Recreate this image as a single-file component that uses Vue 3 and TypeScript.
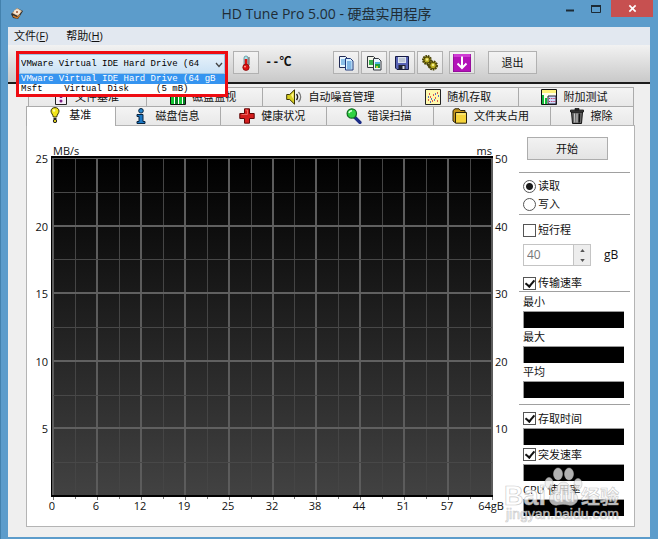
<script setup lang="ts">
import { ref } from 'vue'

interface Tab {
  label: string
  icon: string
  grow: number
}

const drive = ref('VMware Virtual IDE Hard Drive (64')
const drives: string[] = ['VMware Virtual IDE Hard Drive (64 gB', 'Msft    Virtual Disk     (5 mB)']

const backTabs: Tab[] = [
  { label: '文件基准', icon: 'filebench', grow: 118 },
  { label: '磁盘监视', icon: 'monitor', grow: 116 },
  { label: '自动噪音管理', icon: 'speaker', grow: 139 },
  { label: '随机存取', icon: 'random', grow: 117 },
  { label: '附加测试', icon: 'extra', grow: 115 },
]
const frontTabs: Tab[] = [
  { label: '基准', icon: 'bulb', grow: 88 },
  { label: '磁盘信息', icon: 'info', grow: 106 },
  { label: '健康状况', icon: 'cross', grow: 106 },
  { label: '错误扫描', icon: 'magnifier', grow: 107 },
  { label: '文件夹占用', icon: 'folder', grow: 118 },
  { label: '擦除', icon: 'trash', grow: 82 },
]

const xLabels: string[] = ['0', '6', '12', '19', '25', '32', '38', '44', '51', '57', '64gB']
const yLeft: string[] = ['25', '20', '15', '10', '5']
const yRight: string[] = ['50', '40', '30', '20', '10']

const plot = { left: 26, top: 32, right: 465, bottom: 370 }
const gx = (i: number): number => Math.round(plot.left + (i * (plot.right - plot.left)) / 20)
const gy = (i: number): number => Math.round(plot.top + (i * (plot.bottom - plot.top)) / 10)

const mode = ref('read')
const shortStroke = ref(false)
const strokeSize = ref('40')
const transfer = ref(true)
const access = ref(true)
const burst = ref(true)
</script>

<template>
  <div class="window">
    <header class="titlebar">
      <svg class="app-icon" viewBox="0 0 14 14" aria-hidden="true">
        <path d="M1 7 7 1l6 3-5 8-5-1z" fill="#33302c" />
        <path d="M2 6 7 1l5 3-4 5z" fill="#e2c6a6" />
        <ellipse cx="7" cy="5" rx="3" ry="2.4" fill="#f7e8d4" />
        <circle cx="7" cy="5" r="1" fill="#a0522d" />
        <path d="M3 9l4 2 3-3" stroke="#c9792b" stroke-width="1.4" fill="none" />
      </svg>
      <h1>HD Tune Pro 5.00 - 硬盘实用程序</h1>
      <div class="controls">
        <button type="button" class="ctl" aria-label="最小化"><svg viewBox="0 0 10 10"><path d="M1 6.5h8" stroke="#1c2a35" stroke-width="2" /></svg></button>
        <button type="button" class="ctl" aria-label="最大化"><svg viewBox="0 0 10 10"><path d="M.5 1.5h9v7h-9z" fill="none" stroke="#1c2a35" /><path d="M0 2h10" stroke="#1c2a35" stroke-width="2" /></svg></button>
        <button type="button" class="ctl close" aria-label="关闭"><svg viewBox="0 0 10 10"><path d="M1.5 1.5l7 7M8.5 1.5l-7 7" stroke="#fff" stroke-width="1.8" /></svg></button>
      </div>
    </header>

    <div class="client">
      <nav class="menu">
        <a href="#">文件(<u>F</u>)</a>
        <a href="#">帮助(<u>H</u>)</a>
      </nav>

      <div class="toolbar">
        <div class="picker">
          <select v-model="drive" aria-label="硬盘">
            <option>{{ drive }}</option>
          </select>
          <svg class="chevron" viewBox="0 0 8 6" aria-hidden="true"><path d="M1 1l3 3.5L7 1" fill="none" stroke="#444" stroke-width="1.3" /></svg>
          <ul class="drives" role="listbox" aria-label="硬盘列表">
            <li v-for="(d, i) in drives" :key="d" role="option" :aria-selected="i === 0" :class="{ on: i === 0 }">{{ d }}</li>
          </ul>
        </div>
        <button type="button" class="tool" aria-label="温度">
          <svg viewBox="0 0 16 16"><rect x="6" y="1" width="4" height="10" rx="2" fill="#a9e4ea" stroke="#5a8a96" stroke-width=".8" /><path d="M8 4v8" stroke="#e01010" stroke-width="2.6" /><circle cx="8" cy="12.3" r="3.2" fill="#dc1010" stroke="#7c0505" stroke-width=".7" /><path d="M11 2v8" stroke="#333" stroke-width=".8" /><circle cx="7" cy="11.6" r=".9" fill="#ffb0a0" /></svg>
        </button>
        <span class="temp">--℃</span>
        <div class="tools">
          <button type="button" class="tool" aria-label="复制文本">
            <svg viewBox="0 0 16 16"><path d="M1.5 1.5h6l2 2v9h-8z" fill="#e8f6ff" stroke="#222b55" /><path d="M3 5h5M3 7h5M3 9h5" stroke="#338ad0" /><path d="M7.500 3.500h5l2.500 2.500v9H7.500z" fill="#d8f0ff" stroke="#203a7c" /><path d="M9 7h4.500M9 9h4.500M9 11h4.500M9 13h4.500" stroke="#2c7fc8" /></svg>
          </button>
          <button type="button" class="tool" aria-label="复制图像">
            <svg viewBox="0 0 16 16"><path d="M1.500 1.500h6l2 2v9h-8z" fill="#f2f5e9" stroke="#33373d" /><path d="M3 5h4v5H3z" fill="#36b14b" /><path d="M7.500 3.500h5l2.500 2.500v9H7.500z" fill="#eef8ff" stroke="#33373d" /><path d="M9 7h5v6H9z" fill="#1e9e3e" /><path d="M9 7h5v2H9z" fill="#54b5df" /><path d="M10 11h2v2h-2z" fill="#c6ce32" /></svg>
          </button>
          <button type="button" class="tool" aria-label="保存">
            <svg viewBox="0 0 16 16"><path d="M1.500 1.500h13v13H3l-1.500-1.500z" fill="#5863b5" stroke="#151a45" /><path d="M4 2h8v6H4z" fill="#dce4ee" /><path d="M5 4h6M5 6h6" stroke="#8d98ae" stroke-width=".8" /><path d="M4.500 10h7v4.500h-7z" fill="#202330" /><path d="M8.500 11h2v3h-2z" fill="#d8dce6" /></svg>
          </button>
          <button type="button" class="tool" aria-label="选项">
            <svg viewBox="0 0 16 16"><g fill="#b9ae21" stroke="#49430a" stroke-width=".9"><circle cx="5" cy="5" r="4" stroke-dasharray="1.600 .8" stroke-width="2" /><circle cx="5" cy="5" r="3" /><circle cx="11" cy="10.500" r="4" stroke-dasharray="1.600 .8" stroke-width="2" /><circle cx="11" cy="10.500" r="3.200" /></g><circle cx="5" cy="4.500" r="1.200" fill="#f2eb8c" /><circle cx="11" cy="10" r="1.300" fill="#f2eb8c" /><path d="M5 9l3 4" stroke="#49430a" stroke-width="1.500" /></svg>
          </button>
          <button type="button" class="tool wide-icon" aria-label="最小化到托盘">
            <svg viewBox="0 0 18 18"><rect width="18" height="18" fill="#b312b8" /><path d="M0 0h18v3H0z" fill="#cf3bd3" /><path d="M0 0v18h18V0" fill="none" stroke="#7b0a80" stroke-width="1" /><path d="M9 2.500v11M4.500 9.500L9 14l4.500-4.500" fill="none" stroke="#fff" stroke-width="2" /></svg>
          </button>
        </div>
        <button type="button" class="exit">退出</button>
      </div>

      <main class="body">
        <div class="tabs back" role="tablist">
          <button v-for="t in backTabs" :key="t.label" type="button" role="tab" class="tab" :style="{ flexGrow: t.grow }">
            <svg viewBox="0 0 16 16" aria-hidden="true">
              <template v-if="t.icon === 'filebench'"><path d="M2.500.5h11v15h-11z" fill="#f7eef8" stroke="#222" /><path d="M8 3v6" stroke="#7b1c83" stroke-width="2.500" /><circle cx="8" cy="12" r="1.500" fill="#7b1c83" /></template>
              <template v-else-if="t.icon === 'monitor'"><path d="M.5.5h15v15H.5z" fill="#fff" stroke="#111" /><path d="M1 8h3v7H1zM9 5h3v10H9z" fill="#12c531" /><path d="M5 4h3v11H5zM13 8h2v7h-2z" fill="#087f24" /></template>
              <template v-else-if="t.icon === 'speaker'"><path d="M.7 5.500h3L8.500.8v14.400L3.700 10.500h-3z" fill="#d9cf20" stroke="#3a3505" /><path d="M5 6l2.500-2.500v7z" fill="#fff68a" /><path d="M10.500 5c1.500 2 1.500 4 0 6" fill="none" stroke="#222" stroke-width="1.400" /><path d="M12.500 3c2.800 3 2.800 7 0 10" fill="none" stroke="#777" stroke-width="1.400" /></template>
              <template v-else-if="t.icon === 'random'"><path d="M.5.500h15v15H.5z" fill="#fff9ad" stroke="#222" /><path d="M3 11h1M5 8h1M7 12h1M8 6h1M10 9h1M12 4h1M12 12h1M4 5h1" stroke="#d1282d" stroke-width="1.400" /><path d="M3 8h1M6 10h1M9 11h1M10 5h1M13 7h1M5 13h1" stroke="#2543c8" stroke-width="1.400" /></template>
              <template v-else><path d="M.5.500h15v15H.5z" fill="#fffde8" stroke="#111" /><path d="M1 1h14v3H1z" fill="#fff27a" /><path d="M1 6h2v9H1zM4 9h2v6H4z" fill="#12b83a" /><path d="M7 7h8v8H7z" fill="#cfdcff" stroke="#223" /><path d="M8 9.500h7M8 12.500h7" stroke="#bf2750" stroke-dasharray="1.200 1" /></template>
            </svg>
            <span>{{ t.label }}</span>
          </button>
        </div>
        <div class="tabs front" role="tablist">
          <button v-for="(t, i) in frontTabs" :key="t.label" type="button" role="tab" class="tab" :class="{ active: i === 0 }" :aria-selected="i === 0" :style="{ flexGrow: t.grow }">
            <svg viewBox="0 0 16 16" aria-hidden="true">
              <template v-if="t.icon === 'bulb'"><path d="M8 .6c2.700 0 4 1.600 4 3.600S10 7.500 9.700 10H6.300C6 7.500 4 6.200 4 4.200S5.300.6 8 .6z" fill="#f1e51c" stroke="#333006" /><path d="M6.500 11h3v1.500h-3z" fill="#222" /><circle cx="8" cy="14" r="1.700" fill="#d8ca1e" stroke="#222" /><circle cx="7" cy="3.500" r="1.200" fill="#fffcae" /></template>
              <template v-else-if="t.icon === 'info'"><circle cx="8" cy="2.800" r="2.300" fill="#2a8ad0" stroke="#08233e" /><path d="M4 6.500h6v7h2v2H4v-2h2v-5H4z" fill="#1b78c4" stroke="#08233e" /></template>
              <template v-else-if="t.icon === 'cross'"><path d="M5.500.8h5v4.700h4.700v5h-4.700v4.700h-5v-4.700H.8v-5h4.700z" fill="#d31d1d" stroke="#5e0606" /><path d="M6.500 2h2v4.500h-6" fill="none" stroke="#ef6660" /></template>
              <template v-else-if="t.icon === 'magnifier'"><path d="M8.500 9l5.500 5.500" stroke="#1b2c86" stroke-width="3.200" stroke-linecap="round" /><circle cx="5.800" cy="5.500" r="4.700" fill="#2fd343" stroke="#116a20" stroke-width="1.200" /><path d="M3 5c.3-1.500 1.500-2.300 3-2.300" stroke="#d8ffd8" stroke-width="1.400" fill="none" /></template>
              <template v-else-if="t.icon === 'folder'"><path d="M1 2.500L3 .8h4l1.500 1.700H13v12H3l-2-1.500z" fill="#c8961a" stroke="#2b2207" /><path d="M3.500 4.500h11v10.700h-11z" fill="#f5d33a" stroke="#2b2207" /><path d="M4.500 6h9" stroke="#fff4a0" /></template>
              <template v-else><path d="M2.500 4h11l-1 11.500h-9z" fill="#666" stroke="#111" /><path d="M1.500 2h13v2h-13zM6 .5h4V2H6z" fill="#444" stroke="#111" stroke-width=".8" /><path d="M5.500 5.500l.3 9M8 5.500v9" stroke="#ccc" /><path d="M10.500 5.500l-.3 9" stroke="#111" stroke-width="1.400" /></template>
            </svg>
            <span>{{ t.label }}</span>
          </button>
        </div>

        <section class="panel">
          <svg class="chart" viewBox="0 0 492 400" role="img" aria-label="MB/s">
            <defs>
              <linearGradient id="plotFill" x1="0" y1="0" x2="0" y2="1">
                <stop offset="0" stop-color="#000" />
                <stop offset="1" stop-color="#424242" />
              </linearGradient>
            </defs>
            <rect x="24" y="30" width="442" height="341" fill="#000" />
            <rect x="26" y="32" width="439" height="337" fill="url(#plotFill)" />
            <g shape-rendering="crispEdges">
              <template v-for="i in 21" :key="'x' + i">
                <rect :x="gx(i - 1) - (i % 2)" y="32" :width="i % 2 ? 2 : 1" height="337" :fill="i % 2 ? '#5c5c5c' : '#454545'" />
                <rect :x="gx(i - 1)" y="371" width="1" :height="i % 2 ? 3 : 2" fill="#777" />
              </template>
              <template v-for="i in 10" :key="'y' + i">
                <rect x="26" :y="gy(i - 1) - (i % 2 && i > 1 ? 1 : 0)" width="439" :height="i % 2 && i > 1 ? 2 : 1" :fill="i % 2 ? '#606060' : '#484848'" />
              </template>
            </g>
            <text x="26" y="29">MB/s</text>
            <text x="465" y="29" text-anchor="end">ms</text>
            <text v-for="(v, i) in yLeft" :key="'l' + v" x="21" :y="gy(i * 2) + 5" text-anchor="end">{{ v }}</text>
            <text v-for="(v, i) in yRight" :key="'r' + v" x="468" :y="gy(i * 2) + 5">{{ v }}</text>
            <text v-for="(v, i) in xLabels" :key="'b' + v" :x="gx(i * 2) - 1" y="384" text-anchor="middle">{{ v }}</text>
          </svg>

          <form class="side" @submit.prevent>
            <button type="submit" class="start">开始</button>
            <fieldset class="modes">
              <label><input v-model="mode" type="radio" name="mode" value="read" />读取</label>
              <label><input v-model="mode" type="radio" name="mode" value="write" />写入</label>
            </fieldset>
            <label class="check short"><input v-model="shortStroke" type="checkbox" />短行程</label>
            <div class="size">
              <div class="spin">
                <input id="size" v-model="strokeSize" type="text" disabled />
                <div class="arrows">
                  <button type="button" aria-label="增加" disabled><svg viewBox="0 0 6 4"><path d="M0 4l3-4 3 4z" fill="#555" /></svg></button>
                  <button type="button" aria-label="减少" disabled><svg viewBox="0 0 6 4"><path d="M0 0l3 4 3-4z" fill="#555" /></svg></button>
                </div>
              </div>
              <label for="size">gB</label>
            </div>
            <label class="check rate"><input v-model="transfer" type="checkbox" />传输速率</label>
            <div class="stats">
              <span class="cap">最小</span><output class="bar"></output>
              <span class="cap">最大</span><output class="bar"></output>
              <span class="cap">平均</span><output class="bar"></output>
            </div>
            <div class="stats lower">
              <label class="check"><input v-model="access" type="checkbox" />存取时间</label><output class="bar"></output>
              <label class="check"><input v-model="burst" type="checkbox" />突发速率</label><output class="bar"></output>
              <span class="cap">CPU 使用率</span><output class="bar"></output>
            </div>
          </form>
        </section>
      </main>
    </div>

    <svg class="watermark" viewBox="0 0 130 64" aria-hidden="true">
      <g fill="#fff" fill-opacity=".75" stroke="#b4b4b4" stroke-opacity=".7" stroke-width=".7">
        <g fill="#ececec">
          <ellipse cx="59" cy="10" rx="4.500" ry="6" />
          <ellipse cx="70" cy="10" rx="4.500" ry="6" />
          <ellipse cx="50" cy="19" rx="4" ry="5.500" />
          <ellipse cx="79" cy="20" rx="4" ry="5.500" />
          <path d="M64.500 18c5 0 6 5 9 8s6 6 5 10-5 6-9 5-7-1-11 0-8-2-8-6 2-6 5-9 4-8 9-8z" />
        </g>
        <text class="wm-big" x="5" y="41">Bai</text>
        <text class="wm-du" x="54" y="38">du</text>
        <text class="wm-cn" x="82" y="40">经验</text>
        <text class="wm-url" x="7" y="55">jingyan.baidu.com</text>
      </g>
    </svg>
  </div>
</template>

<style>
body {
  margin: 0;
}
</style>

<style scoped>
* {
  box-sizing: border-box;
}
.window {
  position: relative;
  display: flex;
  flex-direction: column;
  min-height: 100vh;
  padding: 0 8px 2px 7px;
  background: #5c9ccb;
  border-left: 1px solid #4381ad;
  font: 11px/16px "Open Sans", "Noto Sans CJK SC", sans-serif;
  color: #111;
}
button,
input,
select {
  font: inherit;
  color: inherit;
  margin: 0;
}
button {
  padding: 0;
}
.titlebar {
  display: flex;
  align-items: center;
  height: 27px;
}
.app-icon {
  width: 14px;
  height: 14px;
  margin-left: 2px;
}
h1 {
  flex: 1;
  margin: 0;
  padding-left: 72px;
  font-size: 14px;
  font-weight: 400;
  line-height: 20px;
  text-align: center;
  color: #202c35;
}
.controls {
  display: flex;
  align-self: flex-start;
  margin-right: -3px;
}
.ctl {
  display: flex;
  align-items: center;
  justify-content: center;
  width: 26px;
  height: 17px;
  background: none;
  border: 0;
}
.ctl svg {
  width: 10px;
  height: 10px;
}
.close {
  width: 42px;
  margin-left: 2px;
  background: #c75050;
}
.close svg {
  width: 9px;
  height: 9px;
}
.client {
  flex: 1;
  display: flex;
  flex-direction: column;
  background: #efefef;
}
.menu {
  display: flex;
  gap: 18px;
  padding: 1px 6px;
  background: #e2e8f0;
}
.menu a {
  color: #111;
  text-decoration: none;
}
.toolbar {
  display: flex;
  align-items: flex-start;
  height: 39px;
  padding: 6px 8px 0;
  background: linear-gradient(#f2f2f2, #c9c9c9);
  border-bottom: 2px solid #1c1c1c;
}
.picker {
  position: relative;
  z-index: 2;
  width: 212px;
  height: 46px;
  border: 3px solid #ee0c12;
  background: #fff;
  font: 9px/10px "Liberation Mono", monospace;
  color: #000;
}
.picker select {
  display: block;
  width: 100%;
  height: 20px;
  padding: 0 1px;
  appearance: none;
  background: linear-gradient(#e6f1fa, #cbe2f5);
  border: 1px solid #9cc4e4;
  border-radius: 0;
}
.chevron {
  position: absolute;
  top: 8px;
  right: 2px;
  width: 8px;
  height: 6px;
}
.drives {
  margin: 0;
  padding: 0;
  list-style: none;
  white-space: pre;
  overflow: hidden;
}
.drives li {
  padding-left: 2px;
}
.drives .on {
  background: #3594f0;
  color: #fff;
}
.tool,
.exit {
  height: 23px;
  background: linear-gradient(#f3f3f3, #e2e2e2);
  border: 1px solid #b1b1b1;
}
.tool {
  display: flex;
  align-items: center;
  justify-content: center;
  width: 26px;
}
.picker + .tool {
  margin-left: 5px;
}
.tool svg {
  width: 16px;
  height: 16px;
}
.wide-icon {
  margin-left: 4px;
}
.wide-icon svg {
  width: 18px;
  height: 18px;
}
.temp {
  width: 60px;
  margin: 4px 0 0 6px;
  font: bold 12px/16px "Liberation Mono", "Noto Sans CJK SC", monospace;
}
.tools {
  display: flex;
  gap: 2px;
  margin-left: 8px;
}
.exit {
  width: 49px;
  margin-left: 13px;
}
.body {
  flex: 1;
  display: flex;
  flex-direction: column;
  padding: 3px 15px 10px 18px;
}
.tabs {
  display: flex;
  padding-right: 1px;
}
.back {
  padding-left: 2px;
}
.tab {
  flex: 1 1 0;
  display: flex;
  align-items: center;
  justify-content: center;
  gap: 6px;
  min-width: 0;
  height: 19px;
  padding-right: 3px;
  background: linear-gradient(#f4f4f4, #e8e8e8);
  border: solid #ababab;
  border-width: 1px 1px 0 0;
  white-space: nowrap;
}
.back .tab:first-child {
  border-left-width: 1px;
}
.tab svg {
  width: 16px;
  height: 16px;
}
.tab.active {
  height: 20px;
  margin-bottom: -1px;
  padding-bottom: 3px;
  background: #fff;
  border-left-width: 1px;
  z-index: 1;
}
.panel {
  flex: 1;
  display: flex;
  background: #fff;
  border: 1px solid #b4b4b4;
}
.chart {
  flex: 1;
  min-width: 0;
  align-self: flex-start;
}
.chart text {
  font: 11px "Open Sans", sans-serif;
  fill: #111;
}
.side {
  display: flex;
  flex-direction: column;
  width: 111px;
  margin-right: 4px;
  padding-top: 11px;
}
.start {
  align-self: center;
  width: 81px;
  height: 23px;
  margin-right: 15px;
  background: linear-gradient(#f2f2f2, #e4e4e4);
  border: 1px solid #adadad;
}
.modes {
  margin: 12px 0 0;
  padding: 4px 0 1px 4px;
  border: solid #a0a0a0;
  border-width: 1px 0;
}
.modes label,
.check {
  display: flex;
  align-items: center;
  gap: 2px;
  height: 18px;
}
input[type="radio"],
input[type="checkbox"] {
  appearance: none;
  flex: none;
  width: 13px;
  height: 13px;
  background: #fff;
  border: 1px solid #555;
}
input[type="radio"] {
  border-radius: 50%;
}
input[type="radio"]:checked {
  background: radial-gradient(circle, #1a1a1a 3px, #fff 4px);
}
input[type="checkbox"]:checked::before {
  content: "";
  display: block;
  width: 4px;
  height: 7px;
  margin: 0 0 0 3px;
  border: solid #111;
  border-width: 0 2px 2px 0;
  transform: rotate(40deg);
}
.short {
  margin-top: 6px;
  padding-left: 4px;
}
.size {
  display: flex;
  align-items: center;
  gap: 13px;
  margin-top: 5px;
  padding-left: 4px;
  font-size: 12px;
}
.spin {
  display: flex;
  width: 68px;
  height: 22px;
  border: 1px solid #c4c4c4;
}
.spin input {
  flex: 1;
  min-width: 0;
  padding: 0 3px;
  border: 0;
  background: #fff;
  color: #777;
}
.arrows {
  display: flex;
  flex-direction: column;
  width: 17px;
  border-left: 1px solid #c4c4c4;
}
.arrows button {
  flex: 1;
  display: flex;
  align-items: center;
  justify-content: center;
  border: 0;
  background: #ededed;
}
.arrows svg {
  width: 5px;
  height: 3px;
}
.rate {
  height: 16px;
  margin-top: 9px;
  padding-left: 4px;
}
.stats {
  display: flex;
  flex-direction: column;
  padding: 1px 0 0 4px;
  border-top: 1px solid #a0a0a0;
}
.cap {
  height: 18px;
  line-height: 18px;
}
.bar {
  display: block;
  height: 17px;
  margin-right: 6px;
  background: #000;
  border: solid #9a9a9a;
  border-width: 1px 0 0 1px;
}
.lower {
  margin-top: 6px;
  padding-top: 4px;
}
.lower .check {
  height: 19px;
}
.watermark {
  position: absolute;
  right: 29px;
  bottom: 11px;
  z-index: 3;
  width: 130px;
  height: 64px;
  pointer-events: none;
}
.wm-big {
  font: bold 27px "Liberation Sans", sans-serif;
}
.wm-du {
  font: bold 18px "Liberation Sans", sans-serif;
}
.wm-cn {
  font: bold 19px "Noto Sans CJK SC", sans-serif;
}
.wm-url {
  font: 14px "Liberation Sans", sans-serif;
}
</style>
